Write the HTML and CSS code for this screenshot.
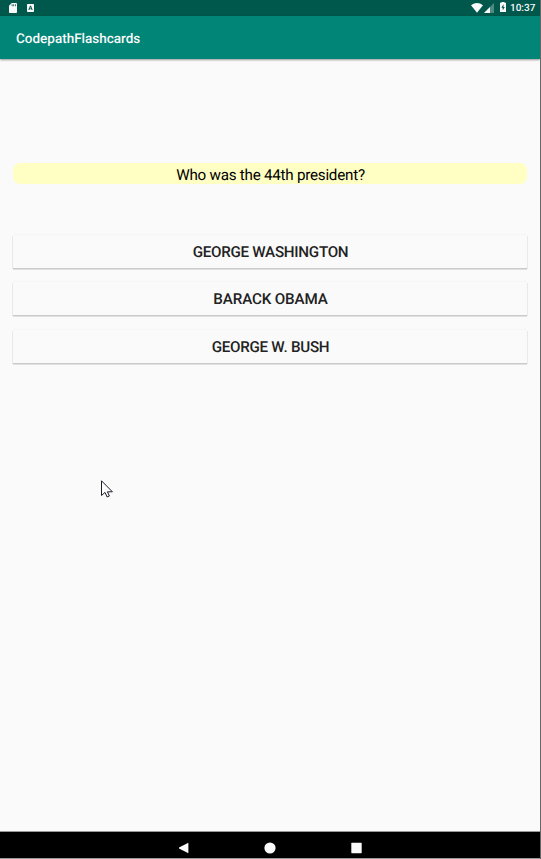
FILE: index.html
```html
<!DOCTYPE html>
<html lang="en">
<head>
<meta charset="utf-8">
<title>CodepathFlashcards</title>
<link rel="stylesheet" href="styles.css">
</head>
<body>
<div class="device">
  <div class="status">
    <svg class="sd" width="8" height="10" viewBox="0 0 8 10"><path fill="#fafafa" fill-rule="evenodd" d="M2.7 0H7.2Q8 0 8 .8V9.2Q8 10 7.2 10H.8Q0 10 0 9.2V2.8ZM2.7 1.3V3.2H3.5V1.3ZM4.3 1.3V3.2H5.1V1.3ZM6 1.3V3.2H6.8V1.3Z"/></svg>
    <svg class="key" width="7" height="8" viewBox="0 0 7 8"><path fill="#fafafa" fill-rule="evenodd" d="M.6 0H6.4L7 .6V7.4L6.4 8H.6L0 7.4V.6ZM3 1.7L1.3 6.1H2.3L2.6 5.2H4.4L4.7 6.1H5.7L4 1.7ZM3.5 2.9L4.1 4.4H2.9Z"/></svg>
    <span class="spacer"></span>
    <svg class="wifi" width="12" height="10" viewBox="0 0 12 10"><path fill="#fafafa" d="M0 2.3Q6-2.1 12 2.3L6 9.7Z"/></svg>
    <svg class="cell" width="10" height="10" viewBox="0 0 10 10"><path fill="#4d8b82" d="M10 0V10H0Z"/><path fill="#fafafa" d="M6 4V10H0Z"/></svg>
    <svg class="battery" width="6" height="10" viewBox="0 0 6 10"><path fill="#fafafa" fill-rule="evenodd" d="M1.5 0H4.5V.8H6V10H0V.8H1.5ZM3.5 2.2L1.3 5.7H2.7V8.6L4.8 4.9H3.5Z"/></svg>
    <span class="clock">10:37</span>
  </div>
  <header class="appbar">CodepathFlashcards</header>
  <main class="content">
    <div class="question">Who was the 44th president?</div>
    <div class="answers">
      <button class="answer">GEORGE WASHINGTON</button>
      <button class="answer obama">BARACK OBAMA</button>
      <button class="answer">GEORGE W. BUSH</button>
    </div>
  </main>
  <nav class="navbar">
    <svg width="12" height="12" viewBox="0 0 12 12"><path fill="#fafafa" d="M10.4.8V11.2L1 6.4V5.6Z"/></svg>
    <svg width="12" height="12" viewBox="0 0 12 12"><circle cx="6" cy="6" r="5.6" fill="#fafafa"/></svg>
    <svg width="12" height="12" viewBox="0 0 12 12"><rect x=".3" y=".8" width="10.4" height="10.4" rx=".6" fill="#fafafa"/></svg>
  </nav>
</div>
<svg class="cursor" width="14" height="20" viewBox="0 0 14 20"><path fill="#fff" stroke="#1c1c28" stroke-width="1" d="M1.5 .8V15.5L5 12.4L7.1 17L9.4 16L7.4 11.8H12.4Z"/></svg>
</body>
</html>
```
FILE: styles.css
```css
* { box-sizing: border-box; }
body {
  margin: 0;
  background: #fafafa;
  font-family: Roboto, sans-serif;
  text-rendering: geometricPrecision;
}
.device {
  width: 541px;
  height: 859px;
  display: flex;
  flex-direction: column;
  border-right: 1px solid #666;
  overflow: hidden;
}
.status {
  flex: none;
  height: 16px;
  display: flex;
  align-items: center;
  padding: 0 5px 0 9px;
  background: #00574b;
  color: #fafafa;
}
.status svg { flex: none; }
.key { margin-left: 10px; }
.spacer { flex: 1; }
.cell { margin-left: 1px; }
.battery { margin-left: 6px; margin-top: -2px; }
.clock {
  width: 25px;
  margin-left: 4px;
  font-size: 10px;
  font-weight: 500;
  line-height: 14px;
  padding-top: 2px;
  white-space: nowrap;
}
.appbar {
  flex: none;
  height: 43px;
  padding-left: 16px;
  line-height: 46px;
  font-size: 13.5px;
  font-weight: 500;
  color: #fafafa;
  background: #008577;
  box-shadow: 0 1px 2px rgba(0, 0, 0, .4);
}
.content {
  flex: 1;
  padding: 104px 13px 0;
}
.question {
  height: 21px;
  border-radius: 7px;
  background: #ffffc4;
  color: #000;
  font-size: 15.2px;
  letter-spacing: -.24px;
  line-height: 24px;
  text-align: center;
  padding-left: 1px;
}
.answers {
  display: grid;
  gap: 14.3px;
  margin-top: 51px;
}
.answer {
  height: 33px;
  padding: 2px 0 0 1px;
  border: 0;
  background: #fafafa;
  box-shadow: 0 1px 0 #c9cac9, 0 2px 0 #dfe0df, 1px 1px 0 #e9e9e9, -1px 1px 0 #e9e9e9, 0 -1px 0 #f5f5f5;
  color: #222;
  font: 500 15.2px/31px Roboto, sans-serif;
  letter-spacing: -.28px;
  text-rendering: geometricPrecision;
}
.obama { letter-spacing: -.15px; }
.navbar {
  flex: none;
  height: 28px;
  display: flex;
  justify-content: center;
  align-items: center;
  gap: 74.5px;
  padding-top: 5px;
  background: #000;
  border-top: 1px solid #999;
  border-bottom: 1px solid #999;
}
.cursor {
  position: absolute;
  left: 100px;
  top: 480px;
}
```
